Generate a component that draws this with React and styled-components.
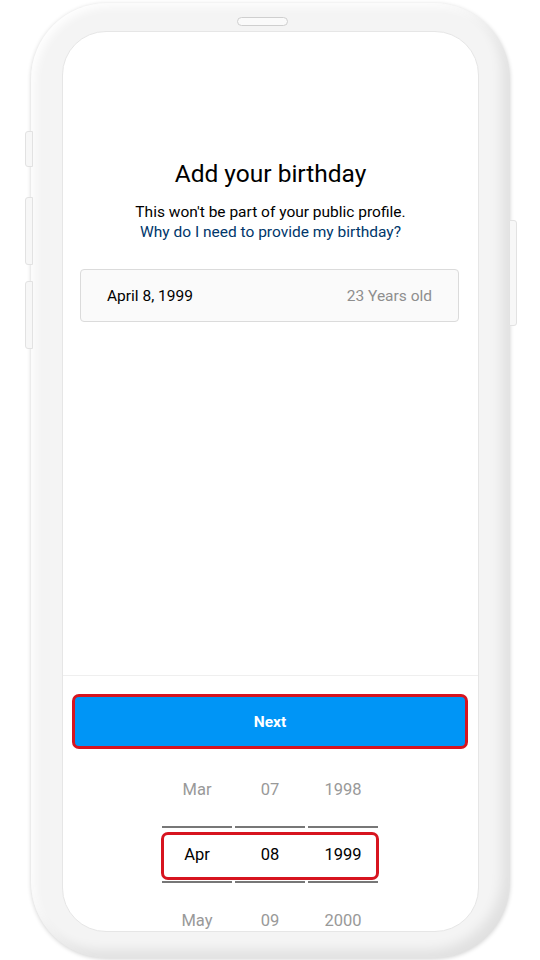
import styled, { createGlobalStyle } from "styled-components";

const GlobalStyle = createGlobalStyle`
  html, body { margin: 0; padding: 0; background: #ffffff; }
  body { font-family: Roboto, "Liberation Sans", Arial, sans-serif; color: #262626; }
`;

const Page = styled.div`
  width: 540px;
  height: 960px;
  padding: 3px 0 0 31px;
  box-sizing: border-box;
  overflow: hidden;
`;

const Phone = styled.div`
  position: relative;
  width: 479px;
  height: 955px;
  box-sizing: border-box;
  padding: 28px 31px 28px 31px;
  border-radius: 76px;
  background: #f4f4f4;
  box-shadow: inset -8px -8px 12px rgba(0, 0, 0, 0.08),
    inset 4px 4px 8px rgba(255, 255, 255, 0.9), 0 1px 4px rgba(0, 0, 0, 0.18);
`;

const SideKey = styled.div`
  position: absolute;
  top: ${(p) => p.top}px;
  height: ${(p) => p.h}px;
  width: 6px;
  background: #f7f7f7;
  border: 1px solid #e2e2e2;
  ${(p) => (p.right ? "right: -7px; border-radius: 0 3px 3px 0;" : "left: -6px; border-radius: 3px 0 0 3px;")}
`;

const Speaker = styled.div`
  position: absolute;
  top: 14px;
  left: 206px;
  width: 49px;
  height: 7px;
  border: 1px solid #cfcfcf;
  border-radius: 6px;
  background: #fafafa;
`;

const Screen = styled.div`
  height: 100%;
  background: #ffffff;
  border: 1px solid #e6e6e6;
  border-radius: 44px;
  overflow: hidden;
  display: flex;
  flex-direction: column;
`;

const Top = styled.div`
  height: 644px;
  flex-shrink: 0;
  display: flex;
  flex-direction: column;
  align-items: center;
  padding-top: 127px;
  box-sizing: border-box;
  border-bottom: 1px solid #efefef;
`;

const Title = styled.h1`
  margin: 0;
  font-size: 24.5px;
  font-weight: 400;
  line-height: 30px;
  color: #000;
`;

const Sub = styled.p`
  margin: 13px 0 0;
  font-size: 15.5px;
  line-height: 20px;
  text-align: center;
  color: #000;
`;

const Link = styled.span`
  display: block;
  color: #00376b;
`;

const DateField = styled.div`
  margin-top: 27px;
  align-self: stretch;
  margin-left: 17px;
  margin-right: 19px;
  height: 53px;
  box-sizing: border-box;
  border: 1px solid #dbdbdb;
  border-radius: 4px;
  background: #fafafa;
  display: flex;
  align-items: center;
  justify-content: space-between;
  padding: 0 26px 0 26px;
  font-size: 15.5px;
  color: #000;
`;

const Muted = styled.span`
  color: #8e8e8e;
`;

const Bottom = styled.div`
  padding: 18px 10px 0 9px;
  display: flex;
  flex-direction: column;
  align-items: center;
`;

const NextButton = styled.button`
  align-self: stretch;
  height: 55px;
  border: 3px solid #d7141f;
  border-radius: 7px;
  background: #0095f6;
  color: #ffffff;
  font-family: Roboto, "Liberation Sans", Arial, sans-serif;
  font-size: 15.5px;
  font-weight: 700;
`;

const Picker = styled.div`
  position: relative;
  margin-top: 7px;
  display: flex;
  gap: 3px;
`;

const Column = styled.div`
  width: 70px;
  display: flex;
  flex-direction: column;
`;

const Cell = styled.div`
  height: ${(p) => (p.selected ? 53 : 66)}px;
  display: flex;
  align-items: center;
  justify-content: center;
  font-size: 16.5px;
  color: ${(p) => (p.selected ? "#000" : "#999")};
  ${(p) =>
    p.selected &&
    "border-top: 2px solid #777; border-bottom: 2px solid #777; margin-top: 4px; margin-bottom: 4px;"}
`;

const Highlight = styled.div`
  position: absolute;
  left: -1px;
  right: -1px;
  top: 76px;
  height: 48px;
  box-sizing: border-box;
  border: 3px solid #d7141f;
  border-radius: 7px;
  pointer-events: none;
`;

const columns = [
  ["Mar", "Apr", "May"],
  ["07", "08", "09"],
  ["1998", "1999", "2000"],
];

export default function App() {
  return (
    <>
      <GlobalStyle />
      <Page>
        <Phone>
          <Speaker />
          <SideKey top={128} h={34} />
          <SideKey top={194} h={66} />
          <SideKey top={278} h={66} />
          <SideKey right top={217} h={104} />
          <Screen>
            <Top>
              <Title>Add your birthday</Title>
              <Sub>
                This won't be part of your public profile.
                <Link>Why do I need to provide my birthday?</Link>
              </Sub>
              <DateField>
                <span>April 8, 1999</span>
                <Muted>23 Years old</Muted>
              </DateField>
            </Top>
            <Bottom>
              <NextButton>Next</NextButton>
              <Picker>
                {columns.map((col, i) => (
                  <Column key={i}>
                    {col.map((v, j) => (
                      <Cell key={v} selected={j === 1}>
                        {v}
                      </Cell>
                    ))}
                  </Column>
                ))}
                <Highlight />
              </Picker>
            </Bottom>
          </Screen>
        </Phone>
      </Page>
    </>
  );
}
